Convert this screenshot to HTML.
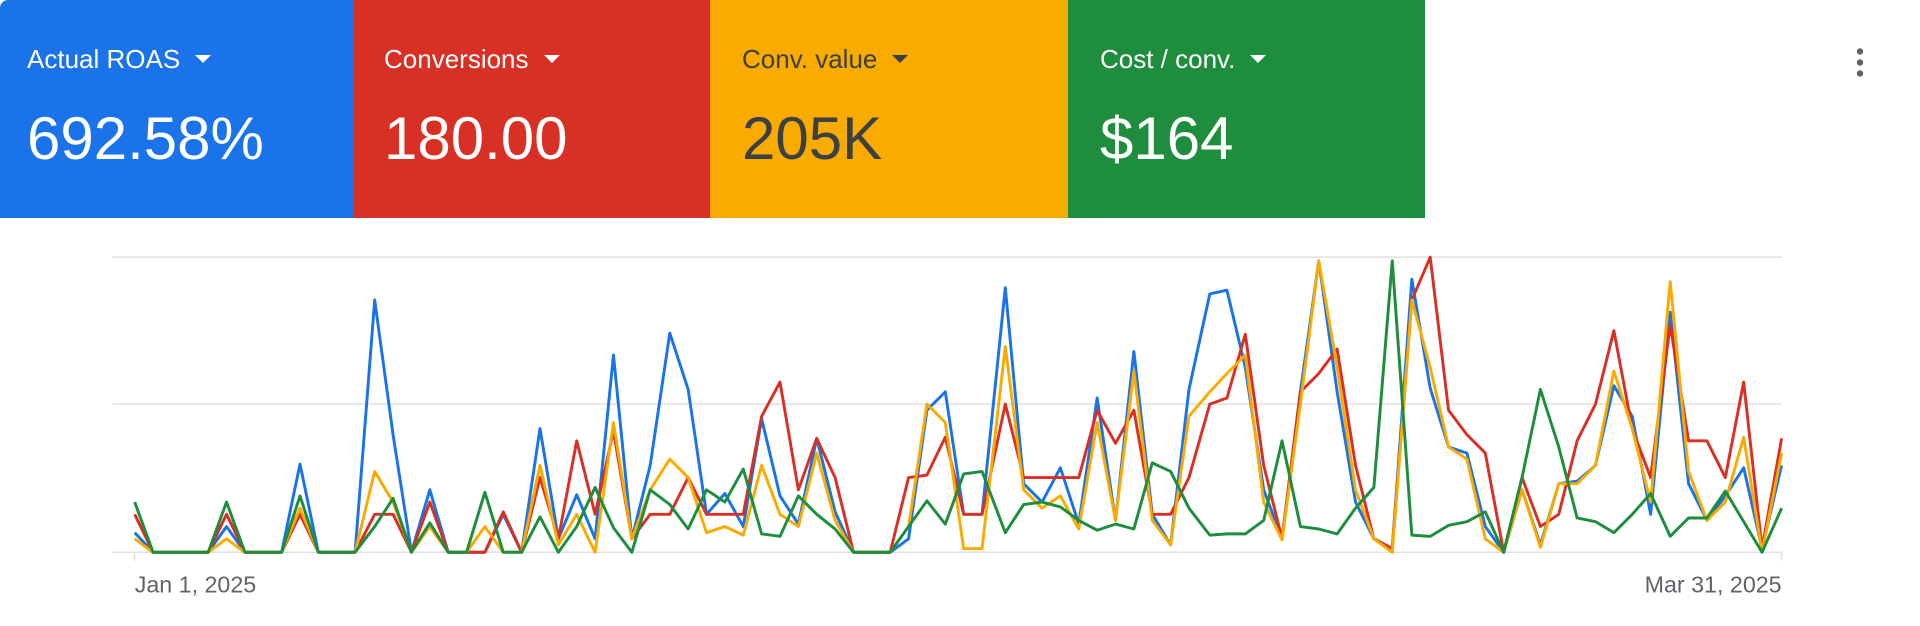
<!DOCTYPE html>
<html><head><meta charset="utf-8"><style>
html,body{margin:0;padding:0;background:#fff;width:1920px;height:626px;overflow:hidden;font-family:"Liberation Sans",Arial,sans-serif;}
.t{position:absolute;top:0;height:218px;}
.l{position:absolute;top:46px;font-size:26px;line-height:1;white-space:nowrap;}
.l i{display:inline-block;width:0;height:0;border-left:8px solid transparent;border-right:8px solid transparent;border-top:8px solid currentColor;margin-left:15px;vertical-align:5px;}
.v{position:absolute;top:109px;font-size:60px;line-height:1;white-space:nowrap;}
svg{position:absolute;left:0;top:0;}
</style></head><body>
<div class="t" style="left:0;width:353px;background:#1a73e8;color:#fff;border-top-left-radius:8px"><div class="l" style="left:27px">Actual ROAS<i></i></div><div class="v" style="left:27px">692.58%</div></div>
<div class="t" style="left:353px;width:357px;background:#d93025;color:#fff"><div class="l" style="left:31px">Conversions<i></i></div><div class="v" style="left:31px">180.00</div></div>
<div class="t" style="left:710px;width:358px;background:#f9ab00;color:#3c4043"><div class="l" style="left:32px">Conv. value<i></i></div><div class="v" style="left:32px">205K</div></div>
<div class="t" style="left:1068px;width:357px;background:#1e8e3e;color:#fff"><div class="l" style="left:32px">Cost / conv.<i></i></div><div class="v" style="left:32px">$164</div></div>
<svg width="1920" height="626" viewBox="0 0 1568 511.2">
<g stroke="#e0e0e0" stroke-width="1.2"><line x1="92" y1="210" x2="1455" y2="210"/><line x1="92" y1="330" x2="1455" y2="330"/><line x1="92" y1="451" x2="1455" y2="451"/><line x1="110" y1="451" x2="110" y2="458"/><line x1="1455" y1="451" x2="1455" y2="458"/></g>
<g fill="none" stroke-width="2.4" stroke-linejoin="round">
<polyline stroke="#1a73e8" points="110,435 125,451 140,451 155,451 170,451 185,430 200,451 215,451 230,451 245,379 260,451 275,451 290,451 306,245 321,355 336,451 351,400 366,451 381,451 396,451 411,420 426,451 441,350 456,440 471,404 486,440 501,290 516,440 531,380 547,272 562,318 577,420 592,403 607,430 622,342 637,405 652,428 667,358 682,418 697,451 712,451 727,451 742,440 757,335 772,320 787,420 802,420 821,235 836,395 851,410 866,382 881,428 896,325 911,425 926,287 941,420 956,445 971,318 988,240 1002,237 1017,300 1032,400 1047,440 1062,320 1077,213 1092,320 1107,410 1122,440 1137,448 1153,228 1168,317 1183,365 1198,370 1213,430 1228,451 1243,400 1258,445 1273,395 1288,393 1303,380 1318,315 1333,340 1348,420 1364,255 1379,395 1394,425 1409,405 1424,382 1439,448 1455,380"/>
<polyline stroke="#d93025" points="110,420 125,451 140,451 155,451 170,451 185,420 200,451 215,451 230,451 245,420 260,451 275,451 290,451 306,420 321,420 336,451 351,410 366,451 381,451 396,451 411,418 426,451 441,390 456,440 471,360 486,420 501,352 516,440 531,420 547,420 562,390 577,420 592,420 607,420 622,340 637,312 652,400 667,358 682,390 697,451 712,451 727,451 742,390 757,388 772,357 787,420 802,420 821,330 836,390 851,390 866,390 881,390 896,335 911,362 926,335 941,420 956,420 971,390 988,330 1002,325 1017,273 1032,380 1047,440 1062,320 1077,305 1092,285 1107,380 1122,440 1137,448 1153,245 1168,210 1183,335 1198,355 1213,370 1228,451 1243,390 1258,430 1273,420 1288,360 1303,330 1318,270 1333,350 1348,390 1364,265 1379,360 1394,360 1409,390 1424,312 1439,448 1455,358"/>
<polyline stroke="#f9ab00" points="110,440 125,451 140,451 155,451 170,451 185,440 200,451 215,451 230,451 245,415 260,451 275,451 290,451 306,385 321,410 336,451 351,430 366,451 381,451 396,430 411,451 426,451 441,380 456,445 471,420 486,451 501,345 516,440 531,400 547,375 562,390 577,435 592,430 607,437 622,380 637,420 652,430 667,370 682,425 697,451 712,451 727,451 742,430 757,330 772,345 787,448 802,448 821,283 836,400 851,415 866,405 881,432 896,345 911,425 926,303 941,425 956,445 971,340 988,320 1002,305 1017,290 1032,410 1047,441 1062,330 1077,213 1092,300 1107,400 1122,440 1137,451 1153,245 1168,300 1183,365 1198,375 1213,440 1228,451 1243,400 1258,447 1273,395 1288,395 1303,380 1318,303 1333,350 1348,410 1364,230 1379,385 1394,425 1409,410 1424,357 1439,451 1455,370"/>
<polyline stroke="#1e8e3e" points="110,410 125,451 140,451 155,451 170,451 185,410 200,451 215,451 230,451 245,405 260,451 275,451 290,451 306,430 321,407 336,451 351,427 366,451 381,451 396,402 411,451 426,451 441,422 456,451 471,430 486,398 501,431 516,451 531,400 547,412 562,432 577,400 592,410 607,383 622,436 637,438 652,405 667,420 682,432 697,451 712,451 727,451 742,430 757,409 772,428 787,387 802,385 821,435 836,412 851,410 866,414 881,425 896,433 911,428 926,432 941,378 956,385 971,415 988,437 1002,436 1017,436 1032,425 1047,360 1062,430 1077,432 1092,436 1107,415 1122,398 1137,213 1153,437 1168,438 1183,429 1198,426 1213,418 1228,451 1243,390 1258,318 1273,365 1288,423 1303,426 1318,435 1333,420 1348,403 1364,438 1379,423 1394,423 1409,401 1424,426 1439,451 1455,415"/>
</g>
<g font-family="Liberation Sans, Arial, sans-serif" font-size="19" fill="#5f6368"><text x="110" y="484">Jan 1, 2025</text><text x="1455" y="484" text-anchor="end">Mar 31, 2025</text></g>
<g fill="#5f6368"><circle cx="1519" cy="42" r="2.6"/><circle cx="1519" cy="51" r="2.6"/><circle cx="1519" cy="60" r="2.6"/></g>
</svg>
</body></html>
